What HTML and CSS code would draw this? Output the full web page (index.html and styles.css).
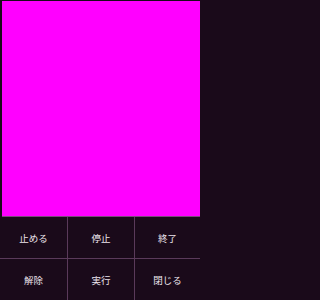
FILE: index.html
```html
<!DOCTYPE html>
<html lang="ja">
<head>
<meta charset="utf-8">
<link rel="stylesheet" href="styles.css">
</head>
<body>
<div class="screen">
  <div class="canvas"></div>
  <div class="menu">
    <div class="item">止める</div>
    <div class="item">停止</div>
    <div class="item">終了</div>
    <div class="item">解除</div>
    <div class="item">実行</div>
    <div class="item">閉じる</div>
  </div>
</div>
</body>
</html>
```
FILE: styles.css
```css
html, body {
  margin: 0;
  padding: 0;
  background: #1a0a1a;
}
.screen {
  width: 200px;
  height: 300px;
  display: flex;
  flex-direction: column;
  background: #1a0a1a;
}
.canvas {
  height: 215px;
  margin: 1px 0 0 2px;
  background: #ff00ff;
  border-bottom: 1px solid #7a4a7a;
}
.menu {
  flex: 1;
  display: grid;
  grid-template-columns: 68px 67px 1fr;
  grid-template-rows: 42px 1fr;
  background: #1a0a1a;
}
.item {
  display: flex;
  align-items: center;
  justify-content: center;
  color: #ece4ec;
  font-family: "Noto Sans CJK JP", sans-serif;
  font-size: 9.5px;
  border-right: 1px solid #5a3a5a;
  border-bottom: 1px solid #5a3a5a;
}
.item:nth-child(3n) {
  border-right: none;
}
.item:nth-child(n+4) {
  border-bottom: none;
}
```
